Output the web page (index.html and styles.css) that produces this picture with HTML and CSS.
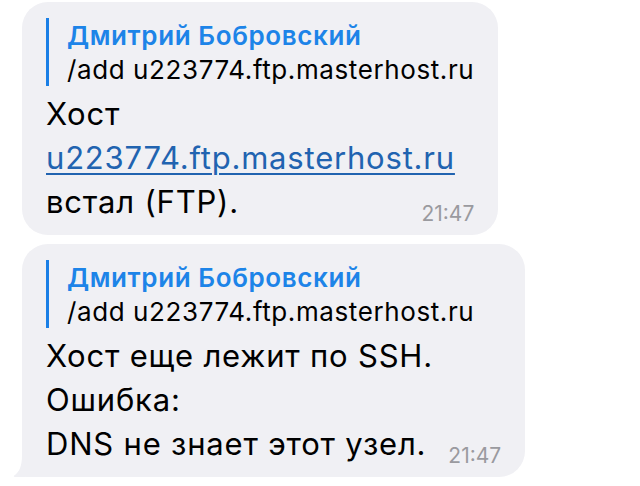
FILE: index.html
```html
<!DOCTYPE html>
<html lang="ru">
<head>
    <meta charset="UTF-8">
    <meta name="viewport" content="width=device-width, initial-scale=1.0">
    <title>Чат</title>
    <link rel="stylesheet" href="styles.css">
</head>
<body>

<div class="chat">
    <div class="bubble">
        <div class="reply">
            <div class="reply-name">Дмитрий Бобровский</div>
            <div class="reply-text">/add u223774.ftp.masterhost.ru</div>
        </div>
        <div class="text">
            <div>Хост</div>
            <div><a href="#">u223774.ftp.masterhost.ru</a></div>
            <div class="last-line">
                <span>встал (FTP).</span>
                <span class="time">21:47</span>
            </div>
        </div>
    </div>

    <div class="bubble bubble-tail">
        <svg class="tail" width="12" height="22" viewBox="0 0 12 22">
            <path d="M9 0 L12 0 L12 22 L2 22 C0.8 22 0.4 21.2 1.2 20.6 C6 17 9 12 9 0 Z" fill="#f0f0f4"/>
        </svg>
        <div class="reply">
            <div class="reply-name">Дмитрий Бобровский</div>
            <div class="reply-text">/add u223774.ftp.masterhost.ru</div>
        </div>
        <div class="text">
            <div>Хост еще лежит по SSH.</div>
            <div>Ошибка:</div>
            <div class="last-line">
                <span>DNS не знает этот узел.</span>
                <span class="time">21:47</span>
            </div>
        </div>
    </div>
</div>

</body>
</html>
```

FILE: styles.css
```css
body {
    font-family: Inter, "Liberation Sans", sans-serif;
    margin: 0;
    padding: 0;
    background-color: #ffffff;
    color: #000000;
}
.chat {
    display: flex;
    flex-direction: column;
    align-items: flex-start;
    gap: 9px;
    padding: 2px 0 0 22px;
}
.bubble {
    position: relative;
    background-color: #f0f0f4;
    border-radius: 26px;
    padding: 16px 24px 11px 24px;
}
.bubble-tail {
    border-bottom-left-radius: 4px;
}
.tail {
    position: absolute;
    left: -9px;
    bottom: 0;
}
.reply {
    border-left: 3px solid #1a7fe6;
    padding: 2px 0 0 18px;
    font-size: 26px;
    letter-spacing: 0.6px;
}
.reply-name {
    color: #1d84e8;
    font-weight: 600;
    line-height: 32px;
}
.reply-text {
    line-height: 32px;
    margin-top: 2px;
}
.text {
    margin-top: 6px;
    font-size: 31px;
    line-height: 44px;
    letter-spacing: 0.8px;
}
.text a {
    color: #2163b0;
    text-decoration: underline;
    text-decoration-thickness: 1.5px;
    text-underline-offset: 4px;
}
.last-line {
    display: flex;
    justify-content: space-between;
    align-items: flex-end;
    gap: 22px;
}
.time {
    color: #9a9a9f;
    font-size: 21px;
    line-height: 20px;
    letter-spacing: 0;
}
```
